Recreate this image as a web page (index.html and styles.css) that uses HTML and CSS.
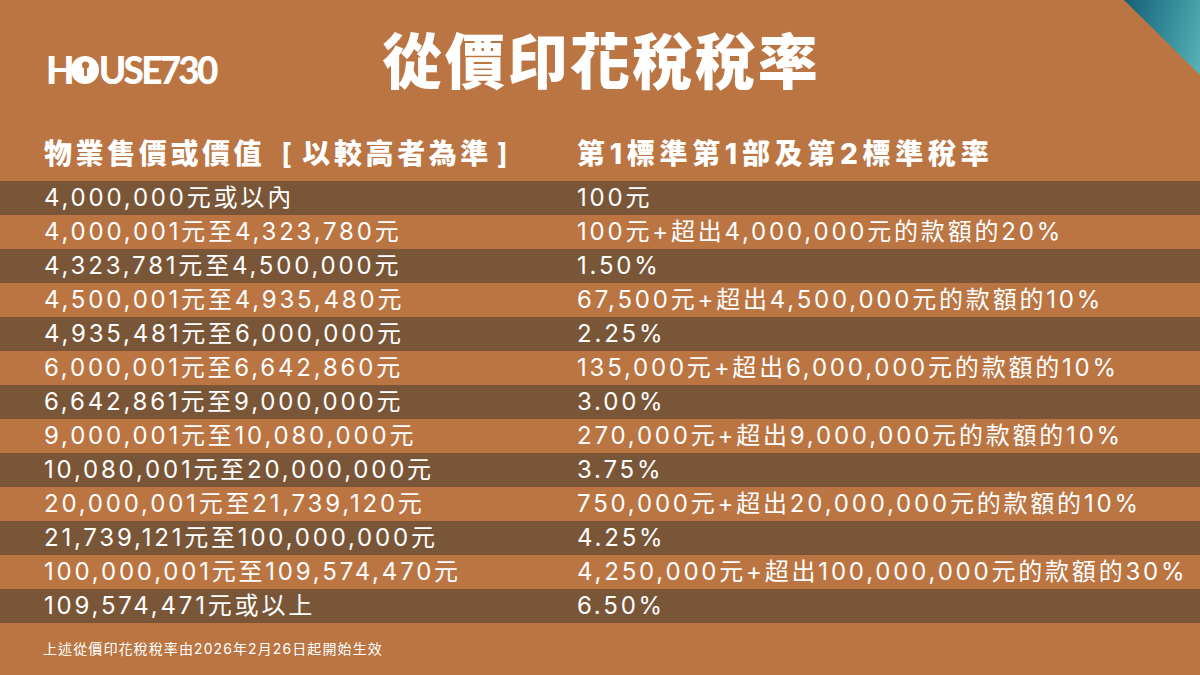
FILE: index.html
```html
<!DOCTYPE html>
<html lang="zh-Hant">
<head>
<meta charset="utf-8">
<title>從價印花稅稅率</title>
<link rel="stylesheet" href="styles.css">
</head>
<body>
<div class="page">
  <div class="corner"></div>
  <header class="top">
    <div class="logo">
      <span>H</span>
      <svg class="logo-o" viewBox="0 0 28 28" width="28" height="28" aria-hidden="true">
        <circle cx="14" cy="14" r="14" fill="#fff"/>
        <circle cx="14.5" cy="9" r="3.6" fill="#ba7543"/>
        <rect x="13" y="9" width="3" height="11" rx="0.8" fill="#ba7543"/>
      </svg>
      <span>USE730</span>
    </div>
    <h1 class="title">從價印花稅稅率</h1>
    <div></div>
  </header>

  <div class="thead">
    <div>物業售價或價值<span class="bl">[</span>以較高者為準<span class="br">]</span></div>
    <div class="thead-rate">第1標準第1部及第2標準稅率</div>
  </div>

  <div class="table">
    <div class="row"><div>4,000,000元或以內</div><div>100元</div></div>
    <div class="row"><div>4,000,001元至4,323,780元</div><div>100元+超出4,000,000元的款額的20%</div></div>
    <div class="row"><div>4,323,781元至4,500,000元</div><div>1.50%</div></div>
    <div class="row"><div>4,500,001元至4,935,480元</div><div>67,500元+超出4,500,000元的款額的10%</div></div>
    <div class="row"><div>4,935,481元至6,000,000元</div><div>2.25%</div></div>
    <div class="row"><div>6,000,001元至6,642,860元</div><div>135,000元+超出6,000,000元的款額的10%</div></div>
    <div class="row"><div>6,642,861元至9,000,000元</div><div>3.00%</div></div>
    <div class="row"><div>9,000,001元至10,080,000元</div><div>270,000元+超出9,000,000元的款額的10%</div></div>
    <div class="row"><div>10,080,001元至20,000,000元</div><div>3.75%</div></div>
    <div class="row"><div>20,000,001元至21,739,120元</div><div>750,000元+超出20,000,000元的款額的10%</div></div>
    <div class="row"><div>21,739,121元至100,000,000元</div><div>4.25%</div></div>
    <div class="row"><div>100,000,001元至109,574,470元</div><div>4,250,000元+超出100,000,000元的款額的30%</div></div>
    <div class="row"><div>109,574,471元或以上</div><div>6.50%</div></div>
  </div>

  <p class="note">上述從價印花稅稅率由2026年2月26日起開始生效</p>
</div>
</body>
</html>
```
FILE: styles.css
```css
html, body {
  margin: 0;
  padding: 0;
}

body {
  background: #ba7543;
  color: #fff;
  font-family: Inter, "Noto Sans CJK TC", sans-serif;
}

.page {
  position: relative;
  width: 1200px;
  height: 675px;
  overflow: hidden;
  background: #ba7543;
}

.corner {
  position: absolute;
  top: 0;
  right: 0;
  width: 76px;
  height: 75px;
  background: linear-gradient(105deg, #165f74 0%, #2f8593 45%, #58b3b7 100%);
  clip-path: polygon(0 0, 100% 0, 100% 100%);
}

.top {
  display: grid;
  grid-template-columns: 1fr auto 1fr;
  padding-top: 28px;
}

.logo {
  align-self: start;
  margin-top: 28px;
  margin-left: 46px;
  display: flex;
  align-items: center;
  height: 28px;
  font-family: Lato, "Liberation Sans", sans-serif;
  font-weight: 900;
  font-size: 37px;
  line-height: 28px;
  letter-spacing: -2.8px;
}

.logo-o {
  display: block;
  margin: 0 0 0 -1px;
  flex: none;
}

.title {
  margin: 0;
  font-family: "Noto Sans CJK TC", sans-serif;
  font-weight: 900;
  font-size: 60px;
  line-height: 60px;
  letter-spacing: 2.6px;
  margin-right: -2.6px;
}

.thead {
  display: grid;
  grid-template-columns: 533px 1fr;
  padding-left: 44px;
  margin-top: 44px;
  margin-bottom: 5px;
  height: 44px;
  line-height: 44px;
  font-family: Inter, "Noto Sans CJK TC", sans-serif;
  font-weight: 800;
  font-size: 28px;
  letter-spacing: 3.6px;
  white-space: nowrap;
}

.thead-rate {
  letter-spacing: 4.7px;
}

.bl {
  font-weight: 700;
  margin: 0 7px 0 16px;
}

.br {
  font-weight: 700;
  margin-left: 5px;
}

.table {
  display: flex;
  flex-direction: column;
}

.row {
  display: grid;
  grid-template-columns: 533px 1fr;
  padding-left: 44px;
  height: 34px;
  line-height: 34px;
  font-size: 24px;
  letter-spacing: 2.8px;
  white-space: nowrap;
}

.row:nth-child(odd) {
  background: #7a5639;
}

.note {
  margin: 16px 0 0 43px;
  font-size: 14px;
  line-height: 20px;
  letter-spacing: 1.1px;
}
```
